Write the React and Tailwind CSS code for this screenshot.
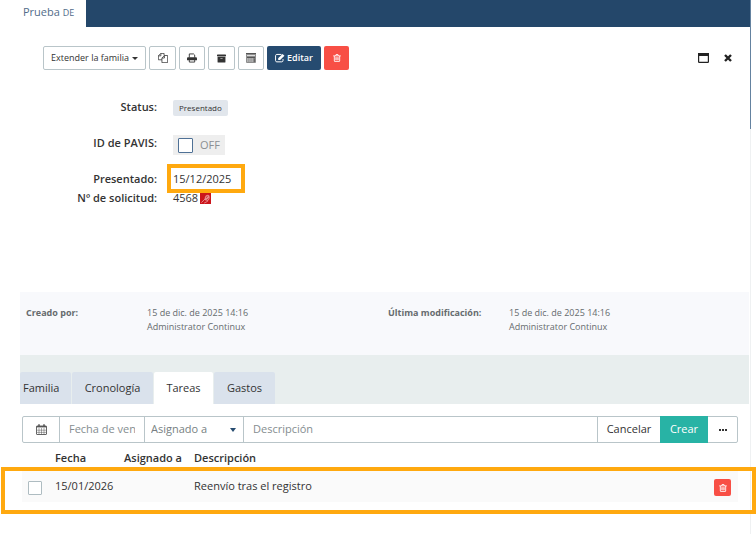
import React, { useState } from 'react'
import { FaArchive } from 'react-icons/fa'

const TABS = [
  { id: 'family', label: 'Familia', width: 'w-[51px] pl-[3px] text-left' },
  { id: 'chronology', label: 'Cronología', width: 'w-[81px] text-center' },
  { id: 'tasks', label: 'Tareas', width: 'w-[59px] text-center' },
  { id: 'expenses', label: 'Gastos', width: 'w-[61px] text-center' },
]

const TASKS = [
  { id: 1, date: '15/01/2026', assignee: '', description: 'Reenvío tras el registro' },
]

/* ── Icons ── */
const FilesIcon = () => (
  <svg width="10" height="10" viewBox="0 0 14 14" fill="none" stroke="currentColor" strokeWidth="1.100">
    <path d="M5.500 9.500h-5V4L4 .5h4.500v3M4 .5V4H.5" />
    <path d="M5.500 13.500V7L9 3.500h4.500v10zM9 3.500V7H5.500" />
  </svg>
)

const PrintIcon = () => (
  <svg width="10" height="10" viewBox="0 0 13 12" fill="none" stroke="currentColor" strokeWidth="1.200">
    <path d="M3 5.500V.7h5.500L10 2.200v3.300M3 8.500v2.800h7V8.500" />
    <path d="M0 9V6.500C0 5.700.7 5 1.500 5h10c.8 0 1.500.7 1.500 1.500V9z" fill="currentColor" stroke="none" />
  </svg>
)

const CalculatorIcon = () => (
  <svg width="10" height="10" viewBox="0 0 10 10" fill="none" stroke="currentColor">
    <rect width="10" height="10" rx="1" fill="#8d8d8d" stroke="none" />
    <path d="M1 2.500h8" stroke="#ddd" />
    <path d="M0 .5h10M1 4.500h8" stroke="#555" />
    <path d="M1 6h6M1 8h6" stroke="#d8d8d8" strokeDasharray="1.500 .7" />
    <path d="M8.500 5.500V9" stroke="#666" />
  </svg>
)

const EditIcon = () => (
  <svg width="10" height="10" viewBox="0 0 14 13" fill="none" stroke="currentColor">
    <path d="M9 1.500H2.500C1.500 1.500.8 2.200.8 3.200v7c0 1 .7 1.700 1.700 1.700h7c1 0 1.700-.7 1.700-1.700V8" strokeWidth="1.400" />
    <path d="M4.500 9.300V6.800l6-6L13.200 3.500l-6 5.800z" fill="currentColor" stroke="none" />
  </svg>
)

const TrashIcon = () => (
  <svg width="8" height="8" viewBox="0 0 12 12" fill="none" stroke="currentColor" strokeWidth="1.300">
    <path d="M.3 2.800h11.400M4 2.800L4.500.8h3L8 2.800M2 3v7.500c0 .6.400.9.900.9h6.200c.5 0 .9-.3.900-.9V3M4.300 4.800v4.700M6 4.800v4.700M7.700 4.800v4.700" />
  </svg>
)

const WindowIcon = () => (
  <svg width="11" height="10" viewBox="0 0 11 10" fill="none" stroke="currentColor">
    <rect x=".6" y=".6" width="9.800" height="8.800" rx=".6" strokeWidth="1.200" />
    <path d="M0 1.500h11" strokeWidth="3" />
  </svg>
)

const CloseIcon = () => (
  <svg width="8" height="8" viewBox="0 0 8 8" fill="none" stroke="currentColor" strokeWidth="2.400">
    <path d="M1 1l6 6M7 1L1 7" />
  </svg>
)

const CalendarIcon = () => (
  <svg width="11" height="11" viewBox="0 0 11 11" fill="none" stroke="currentColor">
    <rect x=".5" y="2" width="10" height="8.500" rx=".5" strokeWidth=".9" />
    <path d="M.5 2.700h10" strokeWidth="1.400" />
    <path d="M3 4v6.500M5.500 4v6.500M8 4v6.500M1 6.200h9M1 8.400h9" strokeWidth=".5" />
    <path d="M3 .3v2.700M8 .3v2.700" strokeWidth="1.500" />
  </svg>
)

const OfficeIcon = () => (
  <svg width="11" height="11" viewBox="0 0 12 12">
    <rect width="12" height="12" fill="#cb151b" />
    <path d="M5 6.500C5 3.500 7 1.800 8.800 1.800S11 5 10 7 6 9.500 5 6.500z" fill="#e88c90" />
    <path d="M1.500 10.500l4-4M4.500 11l4-2" stroke="#e88c90" strokeWidth="1" />
    <path d="M6.500 5.500l2-2.500M7 8l2.500-2" stroke="#cb151b" strokeWidth=".8" />
  </svg>
)

const toolButton =
  'flex h-6 items-center justify-center rounded-xs border border-[#b9c5c9] bg-white text-[#333]'

function Toolbar() {
  return (
    <div className="flex items-center justify-between pl-[43px] pr-[18px] pt-[19px]">
      <div className="flex gap-[3px]">
        <button className={`${toolButton} w-[103px] gap-[3px] text-[9px]`}>
          Extender la familia
          <span className="border-x-[3px] border-t-[3px] border-x-transparent border-t-[#333]" />
        </button>
        <button className={`${toolButton} w-[27px]`} aria-label="Copiar"><FilesIcon /></button>
        <button className={`${toolButton} w-[26px]`} aria-label="Imprimir"><PrintIcon /></button>
        <button className={`${toolButton} w-[27px]`} aria-label="Archivar"><FaArchive size={9} /></button>
        <button className={`${toolButton} w-[26px]`} aria-label="Calcular"><CalculatorIcon /></button>
        <button className="flex h-6 w-[54px] items-center justify-center gap-[2px] rounded-xs bg-[#264b70] text-[9px] font-semibold text-white">
          <EditIcon />
          Editar
        </button>
        <button className="flex h-6 w-[25px] items-center justify-center rounded-xs bg-[#f84f45] text-white" aria-label="Eliminar">
          <TrashIcon />
        </button>
      </div>
      <div className="flex items-center gap-[15px] text-[#222]">
        <button aria-label="Maximizar"><WindowIcon /></button>
        <button aria-label="Cerrar"><CloseIcon /></button>
      </div>
    </div>
  )
}

function Details() {
  return (
    <dl className="grid grid-cols-[157px_1fr] gap-x-4 pt-[27px] text-[11px] [&>dt]:text-right [&>dt]:font-semibold">
      <dt className="h-9 leading-5">Status:</dt>
      <dd className="flex h-[22px] items-center">
        <span className="rounded-xs bg-[#e1e6ec] px-[6px] text-[8px] leading-4">Presentado</span>
      </dd>
      <dt className="h-9 leading-5"><label htmlFor="pavis">ID de PAVIS:</label></dt>
      <dd className="flex">
        <span className="mt-[2px] flex h-5 w-[52px] items-center gap-[7px] bg-[#eee] pl-[5px] text-[#8b8f92]">
          <input id="pavis" type="checkbox" className="size-[15px] appearance-none rounded-[1px] border border-[#4f7196] bg-white" />
          OFF
        </span>
      </dd>
      <dt className="h-5 leading-5">Presentado:</dt>
      <dd className="relative h-5 leading-5">
        15/12/2025
        <span className="pointer-events-none absolute -left-[6px] -top-[5px] h-[29px] w-[78px] border-4 border-[#ffa90f]" />
      </dd>
      <dt className="h-5 leading-[18px]">Nº de solicitud:</dt>
      <dd className="flex h-5 items-start gap-[2px] leading-[18px]">4568 <span className="pt-1"><OfficeIcon /></span></dd>
    </dl>
  )
}

function AuditInfo() {
  return (
    <dl className="ml-5 mr-px mt-[83px] grid h-[63px] grid-cols-[121px_241px_121px_1fr] bg-[#f8f9fc] pl-[6px] pt-[14px] text-[9px] leading-[14px] text-[#666b6e]">
      <dt className="font-bold">Creado por:</dt>
      <dd>15 de dic. de 2025 14:16<br />Administrator Continux</dd>
      <dt className="font-bold">Última modificación:</dt>
      <dd>15 de dic. de 2025 14:16<br />Administrator Continux</dd>
    </dl>
  )
}

function TaskForm() {
  return (
    <form className="ml-[22px] mr-3 mt-3 flex h-[27px] rounded-xs border border-[#b9c5c9] text-[11px]" onSubmit={(e) => e.preventDefault()}>
      <button type="button" className="flex w-9 items-center justify-center text-[#555]" aria-label="Abrir calendario">
        <CalendarIcon />
      </button>
      <input
        aria-label="Fecha de vencimiento"
        placeholder="Fecha de ven"
        className="w-[85px] border-l border-[#b9c5c9] px-[9px] placeholder:text-[#858d90]"
      />
      <div className="relative flex w-[100px] border-x border-[#b9c5c9]">
        <select aria-label="Asignado a" className="w-full appearance-none pl-[6px] text-[#777f82]">
          <option>Asignado a</option>
        </select>
        <span className="pointer-events-none absolute right-[7px] top-[11px] border-x-[3px] border-t-4 border-x-transparent border-t-[#264b70]" />
      </div>
      <input
        aria-label="Descripción"
        placeholder="Descripción"
        className="min-w-0 flex-1 px-[9px] placeholder:text-[#858d90]"
      />
      <button type="button" className="w-[63px] border-l border-[#b9c5c9]">Cancelar</button>
      <button type="submit" className="-my-px w-12 bg-[#28b3a5] text-white">Crear</button>
      <button type="button" className="flex w-[29px] items-center justify-center gap-px" aria-label="Más opciones">
        <span className="size-[2px] bg-[#333]" />
        <span className="size-[2px] bg-[#333]" />
        <span className="size-[2px] bg-[#333]" />
      </button>
    </form>
  )
}

function TaskTable() {
  return (
    <div className="relative ml-[22px] mr-3">
      <table className="w-full table-fixed text-left text-[11px]">
        <thead>
          <tr className="h-[27px] [&>th]:pt-[3px] [&>th]:font-semibold">
            <th className="w-[33px]" />
            <th className="w-[69px]">Fecha</th>
            <th className="w-[70px]">Asignado a</th>
            <th>Descripción</th>
            <th className="w-6" />
          </tr>
        </thead>
        <tbody>
          {TASKS.map((task) => (
            <tr key={task.id} className="h-8 bg-[#fafafa]">
              <td className="pl-[6px]">
                <input type="checkbox" aria-label={task.description} className="mt-[3px] block size-[14px] appearance-none rounded-[1px] border border-[#aebcc1] bg-white" />
              </td>
              <td>{task.date}</td>
              <td>{task.assignee}</td>
              <td>{task.description}</td>
              <td>
                <button className="mt-[3px] flex size-[17px] items-center justify-center rounded-xs bg-[#f84f45] text-white" aria-label="Eliminar tarea">
                  <TrashIcon />
                </button>
              </td>
            </tr>
          ))}
        </tbody>
      </table>
      <div className="pointer-events-none absolute -left-[21px] -right-[18px] top-6 h-[47px] border-4 border-[#ffa90f]" />
    </div>
  )
}

function App() {
  const [activeTab, setActiveTab] = useState('tasks')

  return (
    <div className="min-h-screen overflow-hidden bg-white pr-[5px] font-['Open_Sans',sans-serif] text-[#333]">
      <div className="relative min-h-screen border-r border-[#eff1f2]">
        {/* ── Header ── */}
        <header className="flex h-[27px] bg-[#24476a]">
          <h1 className="w-[86px] bg-white pl-[23px] text-[11px] leading-6 text-[#526c8a]">
            Prueba <span className="text-[9px]">DE</span>
          </h1>
        </header>
        {/* Scroll thumb */}
        <div className="absolute -right-px top-0 h-[129px] w-px bg-[#6482a0]" />

        <main>
          <Toolbar />
          <Details />
          <AuditInfo />

          {/* ── Tabs ── */}
          <nav className="ml-5 mr-px flex h-[49px] items-end gap-px bg-[#e8eeee] text-[11px]">
            {TABS.map(({ id, label, width }) => (
              <button
                key={id}
                onClick={() => setActiveTab(id)}
                className={`h-8 rounded-t-xs ${width} ${activeTab === id ? 'bg-white' : 'bg-[#dae2ec]'}`}
              >
                {label}
              </button>
            ))}
          </nav>

          <TaskForm />
          <TaskTable />
        </main>
      </div>
    </div>
  )
}

export default App
